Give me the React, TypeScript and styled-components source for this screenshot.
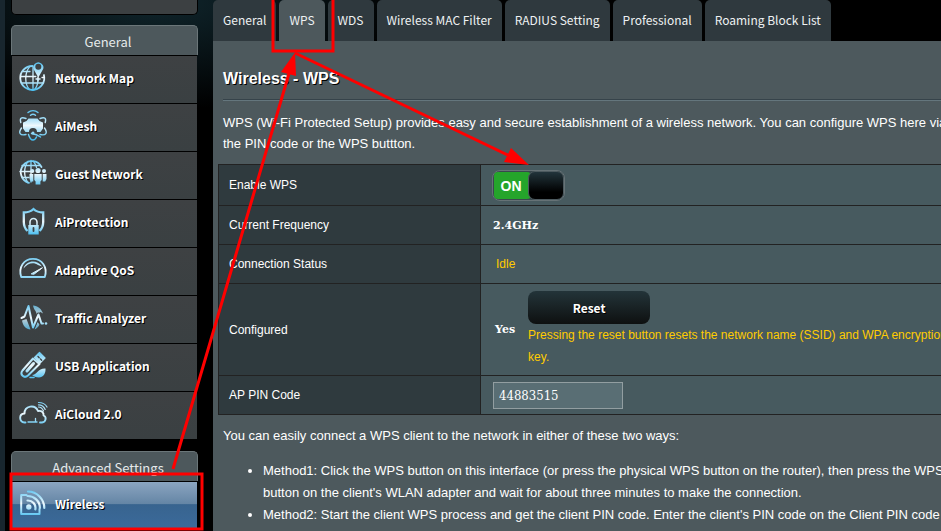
import React, { useId, useState } from "react";
import styled, { createGlobalStyle } from "styled-components";

const sans = `"Liberation Sans", Arial, sans-serif`;
const ui = `"Noto Sans CJK SC", "Noto Sans", sans-serif`;
const serif = `"DejaVu Serif", serif`;

const GlobalStyle = createGlobalStyle`
  *, *::before, *::after { box-sizing: border-box; }
  body {
    margin: 0;
    background: #000;
    color: #fff;
    font-family: ${sans};
    overflow-x: hidden;
  }
`;

const Page = styled.div`
  position: relative;
  display: flex;
  align-items: stretch;
  gap: 15px;
  min-height: 100vh;
  padding-left: 6px;
  border-left: 5px solid #18262e;
  overflow: hidden;
  background:
    radial-gradient(ellipse 260px 110px at 150px 0, #10262d 0%, rgba(16, 38, 45, 0) 100%),
    #000;
`;

const Sidebar = styled.nav`
  flex: 0 0 187px;
  display: flex;
  flex-direction: column;
  font-family: ${ui};
`;

const CardEnd = styled.div`
  height: 15px;
  margin-bottom: 10px;
  border: 1px solid #000;
  border-top: 0;
  border-radius: 0 0 5px 5px;
  background: #3c4042;
`;

const MenuGroup = styled.section`
  margin-bottom: 12px;
`;

const MenuTitle = styled.h2`
  display: flex;
  align-items: center;
  justify-content: center;
  height: 30px;
  margin: 0;
  padding: 2px 0 0 7px;
  border: 1px solid #6b7679;
  border-bottom: 0;
  border-radius: 5px 5px 0 0;
  background: #4d585c;
  color: #e6eaeb;
  font-size: 13px;
  font-weight: 400;
  line-height: 20px;
`;

const MenuList = styled.ul`
  margin: 0;
  padding: 0 1px;
  list-style: none;
`;

const MenuLink = styled.a<{ $active?: boolean }>`
  display: flex;
  align-items: flex-start;
  gap: 8px;
  height: 48px;
  padding-left: 7px;
  border-top: 1px solid #000;
  background: ${(p) =>
    p.$active
      ? "linear-gradient(#8ba5c0 0%, #6485a5 47%, #38648f 48%, #3b6a9b 100%)"
      : "linear-gradient(#3e4143, #3a4042)"};
  color: #fff;
  font-size: 12px;
  font-weight: 700;
  line-height: 44px;
  text-decoration: none;
  text-shadow: 1px 1px 0 #000;
`;

const IconSvg = styled.svg`
  flex: none;
  display: block;
`;

const Main = styled.main`
  flex: 1 0 760px;
  display: flex;
  flex-direction: column;
`;

const Tabs = styled.nav`
  display: flex;
  gap: 3px;
  font-family: ${ui};
`;

const Tab = styled.a<{ $active?: boolean }>`
  height: 41px;
  padding: 0 10px;
  border-radius: 5px 5px 0 0;
  background: ${(p) => (p.$active ? "#4d585c" : "#2f393e")};
  color: #eef1f2;
  font-size: 12px;
  line-height: 40px;
  text-decoration: none;
  white-space: nowrap;
`;

const Panel = styled.div`
  flex: 1;
  padding: 28px 10px 0;
  background: #4d595d;
  font-size: 13px;
`;

const Title = styled.h1`
  margin: 0 0 10px;
  font-size: 16px;
  line-height: 20px;
  text-shadow: 1px 1px 0 #000;
`;

const Divider = styled.hr`
  height: 2px;
  margin: 0 0 11px;
  border: 0;
  border-top: 1px solid #36434a;
  border-bottom: 1px solid #64767d;
`;

const Text = styled.p<{ $line: number }>`
  margin: 0 0 10px;
  line-height: ${(p) => p.$line}px;
`;

const Settings = styled.table`
  width: calc(100% + 10px);
  margin: 0 -5px 10px;
  border-collapse: collapse;
  font-size: 12px;
`;

const Row = styled.tr<{ $height: number }>`
  height: ${(p) => p.$height}px;
`;

const Name = styled.th`
  width: 262px;
  padding: 0 10px;
  border: 1px solid #222;
  background: #2f3a3e;
  font-weight: 400;
  text-align: left;
`;

const Value = styled.td`
  padding: 0 10px 0 12px;
  border: 1px solid #222;
  background: #475a5f;
`;

const Strong = styled.strong`
  font-family: ${serif};
  font-size: 11px;
`;

const Status = styled.span`
  padding-left: 3px;
  color: #fc0;
`;

const Switch = styled.label`
  position: relative;
  display: flex;
  width: 73px;
  height: 31px;
  margin-left: -1px;
  padding: 1px;
  border: 1px solid #667276;
  border-radius: 8px;
  background: #39484d;
  cursor: pointer;
`;

const SwitchInput = styled.input`
  position: absolute;
  inset: 0;
  width: 100%;
  height: 100%;
  margin: 0;
  opacity: 0;
`;

const SwitchText = styled.span<{ $on: boolean }>`
  order: ${(p) => (p.$on ? 0 : 1)};
  flex: 1;
  margin-right: -3px;
  padding-right: 3px;
  border-radius: 4px;
  background: ${(p) => (p.$on ? "#25a52b" : "#6b7679")};
  font-family: ${sans};
  font-size: 14px;
  font-weight: 700;
  line-height: 29px;
  text-align: center;
`;

const Knob = styled.span`
  flex: 0 0 36px;
  margin: -1px -1px -1px 0;
  border: 1px solid #4d5a5f;
  border-radius: 7px;
  background: linear-gradient(#22343b, #000 75%);
`;

const Configured = styled.div`
  display: flex;
  align-items: center;
  gap: 13px;
  padding-left: 2px;
`;

const ResetButton = styled.button`
  display: block;
  width: 122px;
  height: 33px;
  padding: 0;
  border: 0;
  border-radius: 8px;
  background: linear-gradient(#233439, #0e1010);
  color: #fff;
  font-family: ${ui};
  font-size: 12px;
  font-weight: 700;
  text-shadow: 1px 1px 0 #000;
  cursor: pointer;
`;

const Hint = styled.div`
  color: #fc0;
  line-height: 22px;
`;

const PinInput = styled.input`
  display: block;
  width: 130px;
  height: 27px;
  padding: 0 5px;
  border: 1px solid #929ea1;
  border-radius: 0;
  background: #596e74;
  color: #fff;
  font-family: "DejaVu Serif Condensed", ${serif};
  font-size: 13px;
`;

const Methods = styled.ul`
  margin: 13px 0;
  padding-left: 40px;
  line-height: 22px;
`;

const Annotations = styled.svg`
  position: absolute;
  top: 0;
  left: -5px;
  pointer-events: none;
`;

type IconName =
  | "map" | "mesh" | "guest" | "shield" | "gauge" | "traffic" | "usb" | "cloud" | "wireless";

const iconArt: Record<IconName, (paint: string) => React.ReactNode> = {
  map: (c) => (
    <>
      <path d="M13.5 10a12 12 0 1 0 11.4 9" strokeWidth="1.8" />
      <path d="M10.5 10.8C5.5 17 5.500 28 10.500 33.500M14 11v23M1.800 20.500h15M23 21.500h2M2.500 27h22M19 23c0 4-1 8-3.500 10.500" strokeWidth="1.300" />
      <path d="M4 15.500h7" strokeWidth="1.300" />
      <path d="M19.300 21.500l-4-7a5 5 0 1 1 8 0z" fill={c} stroke="none" />
      <circle cx="19.300" cy="10.800" r="3" fill="#3d4143" stroke="none" />
      <path d="M17 23h4M19 21v4" strokeWidth="1.500" />
    </>
  ),
  mesh: (c) => (
    <>
      <path d="M9 8.500a7.500 7.500 0 0 1 10 0M11.500 11.300a4 4 0 0 1 5 0" strokeWidth="1.400" />
      <path d="M9.500 14.500h9l2 2.500 3.500 1.500v6L21.500 28H18a4 4 0 0 0-8 0H6.500L4 24.500v-6L7.500 17z" fill={c} stroke="none" />
      <path d="M7 14.500C2 12.500.5 14.500 1.800 18.500M21 14.500c5-2 6.500 0 5.200 4M2.500 24c-3.500 5-1.500 8 4.500 6.500M25.500 24c3.500 5 1.500 8-4.500 6.500M9.500 30.500c1 3.500 2.500 5.500 4.500 5.500 1.500 0 2.700-1.200 3.500-3M12.500 29.500c4 .5 7 2 9 3.500" strokeWidth="1.400" />
      <circle cx="14" cy="29" r="1.500" fill={c} stroke="none" />
    </>
  ),
  guest: (c) => (
    <>
      <path d="M22.500 15A11 11 0 1 0 10 30.800" strokeWidth="1.800" />
      <path d="M9 9.300c-4.500 6-4.500 15 0 21.500M14.500 9.300c1.500 2 2.500 4 3 6M12 8.500V30M3 13.500h18M1 19.500h10M3 25.500h7" strokeWidth="1.300" />
      <circle cx="19" cy="18.500" r="2.600" fill={c} stroke="none" />
      <circle cx="13.300" cy="19" r="2" fill={c} stroke="none" />
      <circle cx="25" cy="19" r="2" fill={c} stroke="none" />
      <path d="M15.300 22h7.400v6l-1.300 1.500v3h-4.800v-3L15.300 28zM10.500 22h3.800v7.500h-2.500L10.500 27zM23.700 22h3.800v5l-1.300 2.500h-2.500z" fill={c} stroke="none" />
    </>
  ),
  shield: (c) => (
    <>
      <path d="M8.500 31C5.800 28.500 4.800 26 4.800 22v-9.500c4 0 7-1 9.700-3.500 2.700 2.500 5.700 3.500 9.700 3.500V22c0 4-1 6.500-3.700 9" strokeWidth="2.300" strokeLinecap="butt" strokeLinejoin="miter" />
      <path d="M11 25v-3a3.500 3.500 0 0 1 7 0v3" strokeWidth="1.500" />
      <path d="M9.300 25h10.400v9.500H9.300z" fill={c} stroke="none" />
      <path d="M14.500 28v3" stroke="#3d4143" strokeWidth="1.800" />
    </>
  ),
  gauge: (c) => (
    <>
      <path d="M2.200 29C-1 19 5 10.800 14 10.800S29 19 25.800 29z" strokeWidth="1.800" />
      <path d="M4.500 20.500C7 12.500 18 11 23 18.500l-4-1.500c-4-3-10-2.500-14.500 3.500z" fill={c} stroke="none" />
      <path d="M12.500 25.700l11-6-8.500 6.500z" fill={c} strokeWidth="1" />
    </>
  ),
  traffic: (c) => (
    <>
      <path d="M14 9.500c5 .5 8.500 3.500 10 8l-2.500-1.500c-1.500.5-2 2-3 3.500-1-1-1-3-2-4.500-1-1-2-3-2.500-5.500zM3 24.500l4.500-1.500 4 10.500C7 33 4 30 3 24.500zM18.500 26l2 2.500c-1 2.500-3 4-5 5z" fill={c} stroke="none" opacity=".8" />
      <path d="M2.500 22l3-1.500L9.500 10l4.500 21.500 5.500-13 3 9" stroke="#3d4143" strokeWidth="4" />
      <path d="M2.500 22l3-1.500L9.500 10l4.500 21.500 5.500-13 3 9H24" strokeWidth="2" />
      <circle cx="27" cy="27.500" r="1.300" fill={c} stroke="none" />
    </>
  ),
  usb: (c) => (
    <>
      <path d="M14 14.500L3.500 26.500c-3 4 1.500 8.500 5.500 5L20.500 20z" strokeWidth="2" />
      <path d="M14.500 19.500L8 27" strokeWidth="3" />
      <path d="M15.500 13.500l5-5 5.500 5.500-5 5z" fill={c} strokeWidth="1.300" />
      <path d="M19 12.500l1.200 1.200M21.500 15l1.200 1.200" stroke="#3d4143" strokeWidth="1.300" />
      <path d="M13 31c5 0 6-7 13.500-6.500.5 5-2.500 9-6.500 9-3.500 0-5-1-7-2.500z" fill={c} stroke="none" />
      <path d="M11 33.500h4" strokeWidth="1.500" />
    </>
  ),
  cloud: () => (
    <>
      <path d="M6.500 30.500H5.500c-5.500-.5-6-8.500 0-9 0-8 10.500-9.500 13.500-2.500 4-.5 6 1.500 5.500 4.500 3.500 1.500 2.500 6.500-1.500 7h-2" strokeWidth="1.900" />
      <path d="M9 30h9M16.500 26.500v3" strokeWidth="1.300" />
      <path d="M19.500 15c2.500 0 4 1.500 5 4M19.500 12.800c3.500 0 5.500 2 6.700 4.700M19.500 10.500c4 0 7 1.800 8.500 4.500" strokeWidth="1.200" />
    </>
  ),
  wireless: (c) => (
    <>
      <path d="M7.500 13H2.200v19h18.300v-5" strokeWidth="2" />
      <circle cx="9.800" cy="25" r="2.700" fill={c} stroke="none" />
      <path d="M8.500 18.500a7.500 7.500 0 0 1 7.800 9M8.500 14a12 12 0 0 1 12.400 12M9 9.500a16.500 16.500 0 0 1 16.300 16.500" strokeWidth="2.200" />
    </>
  ),
};

function Icon({ name }: { name: IconName }) {
  const id = useId();
  const paint = `url(#${id})`;
  return (
    <IconSvg
      width="28"
      height="44"
      viewBox="0 0 28 44"
      fill="none"
      stroke={paint}
      strokeLinecap="round"
      strokeLinejoin="round"
      overflow="visible"
      aria-hidden="true"
    >
      <defs>
        <linearGradient id={id} gradientUnits="userSpaceOnUse" x1="0" y1="8" x2="0" y2="35">
          <stop offset="0" stopColor="#62c6f2" />
          <stop offset=".5" stopColor="#eef8fd" />
          <stop offset="1" stopColor="#45bdf0" />
        </linearGradient>
      </defs>
      {iconArt[name](paint)}
    </IconSvg>
  );
}

const general: { icon: IconName; label: string }[] = [
  { icon: "map", label: "Network Map" },
  { icon: "mesh", label: "AiMesh" },
  { icon: "guest", label: "Guest Network" },
  { icon: "shield", label: "AiProtection" },
  { icon: "gauge", label: "Adaptive QoS" },
  { icon: "traffic", label: "Traffic Analyzer" },
  { icon: "usb", label: "USB Application" },
  { icon: "cloud", label: "AiCloud 2.0" },
];

const tabs = [
  "General",
  "WPS",
  "WDS",
  "Wireless MAC Filter",
  "RADIUS Setting",
  "Professional",
  "Roaming Block List",
];

export default function App() {
  const [enabled, setEnabled] = useState(true);
  const [pin, setPin] = useState("44883515");

  return (
    <>
      <GlobalStyle />
      <Page>
        <Sidebar>
          <CardEnd />
          <MenuGroup>
            <MenuTitle>General</MenuTitle>
            <MenuList>
              {general.map((item) => (
                <li key={item.label}>
                  <MenuLink href="#">
                    <Icon name={item.icon} />
                    {item.label}
                  </MenuLink>
                </li>
              ))}
            </MenuList>
          </MenuGroup>
          <MenuGroup>
            <MenuTitle>Advanced Settings</MenuTitle>
            <MenuList>
              <li>
                <MenuLink href="#" $active aria-current="page">
                  <Icon name="wireless" />
                  Wireless
                </MenuLink>
              </li>
            </MenuList>
          </MenuGroup>
        </Sidebar>

        <Main>
          <Tabs>
            {tabs.map((tab) => (
              <Tab key={tab} href="#" $active={tab === "WPS"}>
                {tab}
              </Tab>
            ))}
          </Tabs>
          <Panel>
            <Title>Wireless - WPS</Title>
            <Divider />
            <Text $line={21}>
              WPS (Wi-Fi Protected Setup) provides easy and secure establishment of a wireless
              network. You can configure WPS here via the PIN code or the WPS buttton.
            </Text>
            <Settings>
              <tbody>
                <Row $height={41}>
                  <Name scope="row"><label htmlFor="enable-wps">Enable WPS</label></Name>
                  <Value>
                    <Switch>
                      <SwitchInput
                        id="enable-wps"
                        type="checkbox"
                        role="switch"
                        checked={enabled}
                        onChange={(e) => setEnabled(e.target.checked)}
                      />
                      <SwitchText $on={enabled}>{enabled ? "ON" : "OFF"}</SwitchText>
                      <Knob />
                    </Switch>
                  </Value>
                </Row>
                <Row $height={39}>
                  <Name scope="row">Current Frequency</Name>
                  <Value><Strong>2.4GHz</Strong></Value>
                </Row>
                <Row $height={39}>
                  <Name scope="row">Connection Status</Name>
                  <Value><Status>Idle</Status></Value>
                </Row>
                <Row $height={92}>
                  <Name scope="row">Configured</Name>
                  <Value>
                    <Configured>
                      <Strong>Yes</Strong>
                      <div>
                        <ResetButton type="button">Reset</ResetButton>
                        <Hint>
                          Pressing the reset button resets the network name (SSID) and WPA
                          encryption key.
                        </Hint>
                      </div>
                    </Configured>
                  </Value>
                </Row>
                <Row $height={39}>
                  <Name scope="row"><label htmlFor="ap-pin">AP PIN Code</label></Name>
                  <Value>
                    <PinInput id="ap-pin" value={pin} onChange={(e) => setPin(e.target.value)} />
                  </Value>
                </Row>
              </tbody>
            </Settings>
            <Text $line={22}>
              You can easily connect a WPS client to the network in either of these two ways:
            </Text>
            <Methods>
              <li>
                Method1: Click the WPS button on this interface (or press the physical WPS button
                on the router), then press the WPS button on the client's WLAN adapter and wait
                for about three minutes to make the connection.
              </li>
              <li>
                Method2: Start the client WPS process and get the client PIN code. Enter the
                client's PIN code on the Client PIN code
              </li>
            </Methods>
          </Panel>
        </Main>

        <Annotations width="941" height="531" viewBox="0 0 941 531" fill="none" stroke="#f00" strokeWidth="3" aria-hidden="true">
          <path d="M273 0V51H333V0" />
          <rect x="11" y="474" width="191" height="55" />
          <path d="M173 469L290 70M295 53L512 157" />
          <path d="M295 52.500L281 72L296 76zM529 165L504 162L511 148z" fill="#f00" stroke="none" />
        </Annotations>
      </Page>
    </>
  );
}
